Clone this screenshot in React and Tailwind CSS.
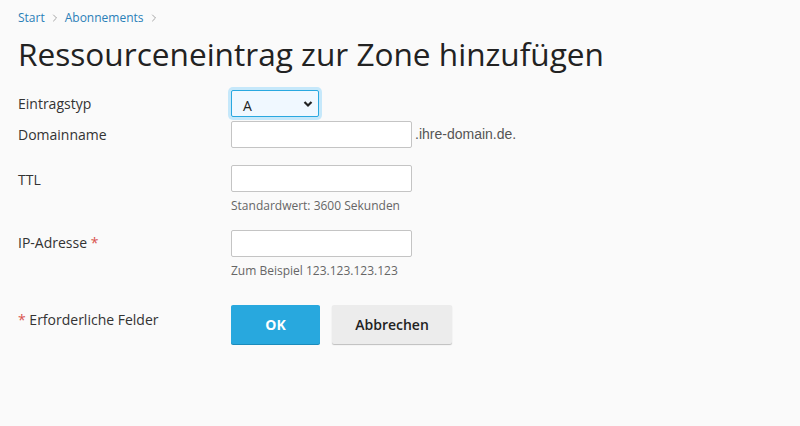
import { ChevronRight } from 'lucide-react'

const Star = () => <span className="text-[#d9534f]">*</span>

function Label({ children, className = '' }) {
  return <div className={`w-[213px] shrink-0 text-[14px] text-[#333] ${className}`}>{children}</div>
}

export default function App() {
  return (
    <div className="min-h-[426px] bg-[#fafafa] px-[18px] pt-[9px] font-['Open_Sans',sans-serif]">
      {/* Breadcrumb */}
      <nav className="flex items-center gap-[4px] text-[12px] text-[#2a7fb8]">
        <a>Start</a>
        <ChevronRight className="h-3 w-3 text-[#888]" strokeWidth={1.5} />
        <a>Abonnements</a>
        <ChevronRight className="h-3 w-3 text-[#888]" strokeWidth={1.5} />
      </nav>

      <h1 className="mt-[7px] text-[31.6px] leading-[40px] text-[#222]">Ressourceneintrag zur Zone hinzufügen</h1>

      <div className="mt-[16px]">
        {/* Eintragstyp */}
        <div className="flex items-center">
          <Label>Eintragstyp</Label>
          <div className="relative h-[27px] w-[88px] rounded-[2px] border border-[#29a8e0] bg-[#f0f8ff] shadow-[0_0_0_3px_#c6e8fa]">
            <span className="absolute left-[11px] top-[4px] text-[14px] text-[#222]">A</span>
            <svg className="absolute right-[5px] top-[9px]" width="10" height="8" viewBox="0 0 10 8">
              <path d="M1.5 2 L5 5.5 L8.5 2" fill="none" stroke="#222" strokeWidth="2.2" />
            </svg>
          </div>
        </div>

        {/* Domainname */}
        <div className="mt-[4px] flex items-center">
          <Label>Domainname</Label>
          <div className="h-[27px] w-[181px] rounded-[2px] border border-[#c4c4c4] bg-white" />
          <span className="ml-[3px] text-[14px] text-[#555]" style={{ fontFamily: '"Liberation Sans", Arial, sans-serif' }}>.ihre-domain.de.</span>
        </div>

        {/* TTL */}
        <div className="mt-[17px] flex">
          <Label className="pt-[4px]">TTL</Label>
          <div>
            <div className="h-[27px] w-[181px] rounded-[2px] border border-[#c4c4c4] bg-white" />
            <div className="mt-[5px] text-[12px] text-[#666]">Standardwert: 3600 Sekunden</div>
          </div>
        </div>

        {/* IP-Adresse */}
        <div className="mt-[15px] flex">
          <Label className="pt-[2px]">IP-Adresse <Star /></Label>
          <div>
            <div className="h-[27px] w-[181px] rounded-[2px] border border-[#c4c4c4] bg-white" />
            <div className="mt-[5px] text-[12px] text-[#666]">Zum Beispiel 123.123.123.123</div>
          </div>
        </div>

        {/* Buttons */}
        <div className="mt-[25px] flex">
          <Label className="pt-[4px]"><Star /> Erforderliche Felder</Label>
          <div className="flex gap-[12px]">
            <button className="h-[39px] w-[89px] rounded-[2px] bg-[#28a8de] text-[14px] font-bold text-white shadow-[0_1px_0_#1b8bbb]">OK</button>
            <button className="h-[39px] w-[120px] rounded-[2px] bg-[#ececec] text-[14px] font-semibold text-[#222] shadow-[0_1px_1px_#bdbdbd]">Abbrechen</button>
          </div>
        </div>
      </div>
    </div>
  )
}
